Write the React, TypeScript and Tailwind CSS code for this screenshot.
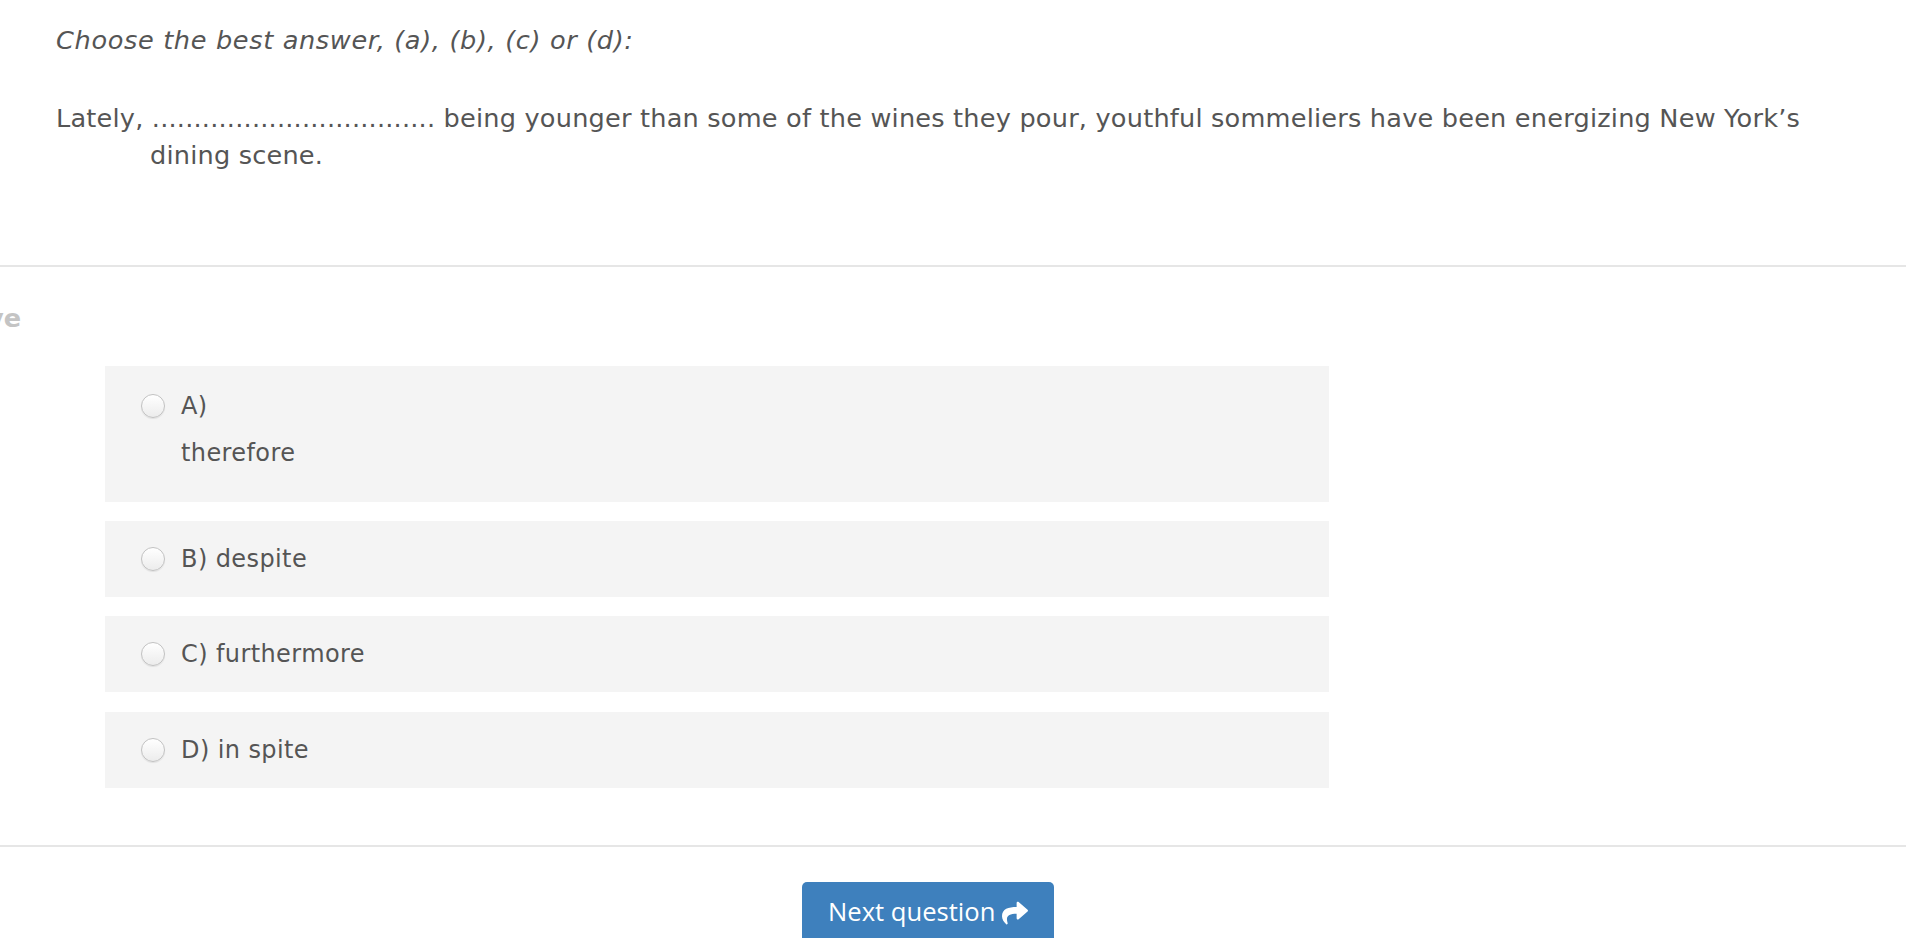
import React from 'react';
import { FaShare } from 'react-icons/fa';

const options = [
  { key: 'A', text: 'therefore', stacked: true },
  { key: 'B', text: 'despite' },
  { key: 'C', text: 'furthermore' },
  { key: 'D', text: 'in spite' },
];

const Radio: React.FC = () => (
  <span className="block w-[24px] h-[24px] shrink-0 rounded-full border border-[#c2c2c2] bg-gradient-to-b from-white to-[#ececec] shadow-[0_1px_1px_rgba(0,0,0,0.08)]" />
);

export default function App() {
  return (
    <div className="min-h-screen overflow-hidden bg-white text-[#555555] font-['DejaVu_Sans',Verdana,sans-serif]">
      {/* Question */}
      <div className="pl-[56px] pt-[22px]">
        <p className="italic text-[25.6px] leading-[37px] tracking-[0.65px]">Choose the best answer, (a), (b), (c) or (d):</p>
        <p className="mt-[40.5px] pl-[94px] -indent-[94px] text-[25.6px] leading-[37px] tracking-[0.2px] whitespace-nowrap">
          Lately, .................................. being younger than some of the wines they pour, youthful sommeliers have been energizing New York’s
          <br />
          dining scene.
        </p>
      </div>

      <div className="mt-[91.5px] h-[2px] bg-[#e6e6e6]" />

      <div className="mt-[33px] h-[36px] leading-[36px] text-[25.6px] font-bold text-[#c4c4c4] -ml-[13px]">ve</div>

      {/* Answers */}
      <div className="mt-[30px] ml-[105px] w-[1224px] flex flex-col gap-[19.2px] text-[24px] leading-[36px] tracking-[0.4px]">
        {options.map((o) =>
          o.stacked ? (
            <label key={o.key} className="flex bg-[#f4f4f4] pl-[36px] pt-[22px] pb-[31px]">
              <span className="h-[36px] flex items-center"><Radio /></span>
              <span className="ml-[16px]">
                <span className="block">{o.key})</span>
                <span className="block mt-[11px]">{o.text}</span>
              </span>
            </label>
          ) : (
            <label key={o.key} className="flex items-center bg-[#f4f4f4] pl-[36px] py-[20px]">
              <Radio />
              <span className="ml-[16px]">{o.key}) {o.text}</span>
            </label>
          )
        )}
      </div>

      <div className="mt-[57px] h-[2px] bg-[#e6e6e6]" />

      <div className="mt-[35px] ml-[802px]">
        <button className="inline-flex items-center h-[62px] px-[26px] rounded-[5px] bg-[#3e80bd] text-white text-[25.6px] font-['Open_Sans',sans-serif]">
          Next question
          <FaShare className="ml-[7px] w-[26px] h-[26px]" />
        </button>
      </div>
    </div>
  );
}
